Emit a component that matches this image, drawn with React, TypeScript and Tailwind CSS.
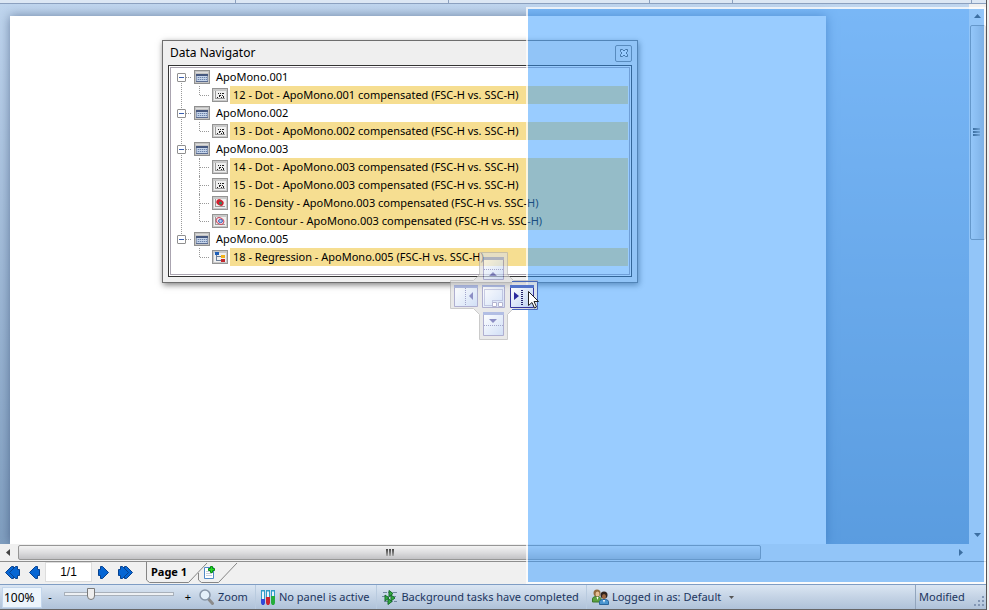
import React from 'react';

type PlotKind = 'dot' | 'density' | 'contour' | 'regression';

interface PlotItem {
  kind: PlotKind;
  label: string;
}

interface DataSet {
  name: string;
  plots: PlotItem[];
}

const dataSets: DataSet[] = [
  { name: 'ApoMono.001', plots: [{ kind: 'dot', label: '12 - Dot - ApoMono.001 compensated (FSC-H vs. SSC-H)' }] },
  { name: 'ApoMono.002', plots: [{ kind: 'dot', label: '13 - Dot - ApoMono.002 compensated (FSC-H vs. SSC-H)' }] },
  {
    name: 'ApoMono.003',
    plots: [
      { kind: 'dot', label: '14 - Dot - ApoMono.003 compensated (FSC-H vs. SSC-H)' },
      { kind: 'dot', label: '15 - Dot - ApoMono.003 compensated (FSC-H vs. SSC-H)' },
      { kind: 'density', label: '16 - Density - ApoMono.003 compensated (FSC-H vs. SSC-H)' },
      { kind: 'contour', label: '17 - Contour - ApoMono.003 compensated (FSC-H vs. SSC-H)' },
    ],
  },
  { name: 'ApoMono.005', plots: [{ kind: 'regression', label: '18 - Regression - ApoMono.005 (FSC-H vs. SSC-H)' }] },
];

const TableIcon = () => (
  <svg width="16" height="14" viewBox="0 0 16 14" shapeRendering="crispEdges" aria-hidden="true">
    <rect width="16" height="14" fill="#8f8f8f" />
    <rect x="1" y="1" width="14" height="12" fill="#c4c4c4" />
    <rect x="2" y="2" width="12" height="1" fill="#dedede" />
    <rect x="2" y="4" width="12" height="8" fill="#8a9ab8" />
    <rect x="2" y="4" width="12" height="2" fill="#46587f" />
    <rect x="3" y="6" width="10" height="5" fill="#c6d5ea" />
    <path d="M3 7h10v1H3zM3 9h10v1H3z" fill="#a9bcd8" />
    <path d="M4 7h1v1H4zM6 7h1v1H6zM8 7h1v1H8zM10 7h1v1h-1zM12 7h1v1h-1zM4 9h1v1H4zM6 9h1v1H6zM8 9h1v1H8zM10 9h1v1h-1zM12 9h1v1h-1z" fill="#6b82a9" />
    <rect x="2" y="11" width="12" height="1" fill="#5b6d92" />
  </svg>
);

const PlotIcon = ({ kind }: { kind: PlotKind }) => (
  <svg width="16" height="14" viewBox="0 0 16 14" shapeRendering="crispEdges" aria-hidden="true">
    <rect width="16" height="14" fill="#949494" />
    <rect x="1" y="1" width="14" height="12" fill="#c9c9c9" />
    <rect x="2" y="3" width="12" height="9" fill="#f0f0f0" />
    {kind !== 'regression' && <path d="M3 3h1v7h9v1H3z" fill="#9a9a9a" />}
    {kind === 'dot' && (
      <path
        fill="#222"
        d="M5 9h1v1H5zM6 5h1v1H6zM7 7h2v1H7zM8 5h1v1H8zM10 5h2v1h-2zM9 9h1v1H9zM11 8h1v2h-1zM7 8h1v1H7zM10 7h1v1h-1z"
      />
    )}
    {kind === 'density' && (
      <g shapeRendering="auto">
        <ellipse cx="8" cy="6.500" rx="3.800" ry="3" transform="rotate(30 8 6.500)" fill="#d1202f" />
        <circle cx="8.500" cy="7" r="1.500" fill="#2b8a65" />
      </g>
    )}
    {kind === 'contour' && (
      <g shapeRendering="auto" fill="none">
        <ellipse cx="8" cy="7" rx="4" ry="3" transform="rotate(30 8 7)" fill="#f3dfe4" stroke="#c9485f" />
        <ellipse cx="8.500" cy="7" rx="2" ry="1.600" fill="#aacdf2" stroke="#3563bd" />
      </g>
    )}
    {kind === 'regression' && (
      <>
        <path d="M4 5h1v6H4zM4 6h6v1H4zM4 10h6v1H4z" fill="#6d7f99" />
        <rect x="3" y="2" width="4" height="3" fill="#1f5fb8" />
        <rect x="9" y="5" width="4" height="3" fill="#f0b21d" />
        <rect x="9" y="9" width="4" height="3" fill="#c3272d" />
      </>
    )}
  </svg>
);

const TreeGroup = ({ data, last }: { data: DataSet; last: boolean }) => (
  <li className="relative">
    {!last && <span className="absolute top-3 -bottom-2 left-[10px] border-l border-dotted border-[#999]" />}
    <div className="relative flex h-[18px] items-center">
      <button
        aria-label={`Collapse ${data.name}`}
        className="ml-[6px] flex size-[9px] items-center justify-center rounded-[1px] border border-[#8f8f8f] bg-white"
      >
        <span className="h-px w-[5px] bg-[#3a5fae]" />
      </button>
      <span className="mr-[3px] w-[5px] border-t border-dotted border-[#999]" />
      <TableIcon />
      <span className="ml-[6px]">{data.name}</span>
    </div>
    <ul>
      {data.plots.map((plot, i) => (
        <li key={plot.label} className="relative flex h-[18px] items-center pl-[41px]">
          <span
            className={`absolute left-[28px] border-l border-dotted border-[#999] ${
              i === data.plots.length - 1 ? 'top-0 h-[9px]' : 'inset-y-0'
            }`}
          />
          <span className="absolute top-[9px] left-[29px] w-[9px] border-t border-dotted border-[#999]" />
          <PlotIcon kind={plot.kind} />
          <span className="ml-[2px] flex h-full flex-1 items-center bg-[#f6de91] pl-[3px]">{plot.label}</span>
        </li>
      ))}
    </ul>
  </li>
);

const DataNavigator = () => (
  <section
    aria-label="Data Navigator"
    className="absolute top-[36px] left-[162px] flex h-[243px] w-[476px] flex-col border border-[#6e6e6e] bg-[#efefef] p-[5px] pt-0 shadow-[1px_2px_6px_rgba(0,0,0,0.5)]"
  >
    <header className="flex h-[24px] items-center justify-between pl-[2px] text-[12px]">
      <h1>Data Navigator</h1>
      <button
        aria-label="Close"
        className="flex size-[17px] items-center justify-center rounded-[2px] border border-[#7c7c7c]"
      >
        <svg width="8" height="8" viewBox="0 0 8 8" fill="#fff" stroke="#555" aria-hidden="true">
          <path d="M.5.5h2L4 2 5.500.5h2v2L6 4l1.500 1.500v2h-2L4 6 2.500 7.500h-2v-2L2 4 .5 2.500z" />
        </svg>
      </button>
    </header>
    <div className="flex-1 border border-[#333] bg-white p-px">
      <ul className="h-full border border-[#aaa4b0] pr-px text-[11px] leading-[18px] whitespace-nowrap">
        {dataSets.map((data, i) => (
          <TreeGroup key={data.name} data={data} last={i === dataSets.length - 1} />
        ))}
      </ul>
    </div>
  </section>
);

const DockGuide = () => (
  <svg
    className="absolute top-[252px] left-[450px]"
    width="90"
    height="90"
    viewBox="0 0 90 90"
    role="img"
    aria-label="Dock position"
  >
    <defs>
      <linearGradient id="pane" x1="0" y1="0" x2="1" y2="1">
        <stop offset="0" stopColor="#fff" />
        <stop offset="1" stopColor="#b9cff2" />
      </linearGradient>
    </defs>
    <g opacity=".65">
      <path d="M29.500.5h28v22l6 6h24v28h-24l-6 6v25h-28v-25l-6-6h-23v-28h23l6-6z" fill="#dedede" stroke="#b0b0b0" />
      <g fill="url(#pane)" stroke="#8585b8">
        <path d="M33.500 5.500h20v22h-20z" />
        <path d="M4.500 33.500h23v21h-23z" />
        <path d="M32.500 33.500h22v22h-22z" />
        <path d="M33.500 60.500h20v23h-20z" />
      </g>
      <path d="M33 5h21v3H33zM4 33h24v3H4zM32 33h23v2H32zM33 60h21v3H33z" fill="#8a9cd6" />
      <path d="M34 17.500h20M34 73.500h20M15.500 36v18" stroke="#7277b0" strokeDasharray="1 1" />
      <path d="M34.500 37.500h18v11h-10v5h-8z" fill="none" stroke="#6c70b0" strokeDasharray="1 1" />
      <path d="M42.500 50.500h4v4h-4zM48.500 50.500h4v4h-4z" fill="#fff" stroke="#8d8db8" />
      <path d="M39 24l4-4 4 4zM39 67h8l-4 4zM23 40v8l-4-4z" fill="#4f52a5" />
    </g>
    <path d="M62 29.500h25.500v28H62" fill="#f2f2f2" fillOpacity=".45" stroke="#4668bb" />
    <path d="M60.500 33.500h23v22h-23z" fill="url(#pane)" stroke="#35359c" />
    <path d="M60 33h24v3H60z" fill="#5273ca" />
    <path d="M71 38h2v1h-2zM71 40h2v1h-2zM71 42h2v1h-2zM71 44h2v1h-2zM71 46h2v1h-2zM71 48h2v1h-2zM71 50h2v1h-2zM71 52h2v1h-2z" fill="#22226b" />
    <path d="M64 40v8l5-4z" fill="#29299e" />
  </svg>
);

const PageArrow = ({ double, back }: { double?: boolean; back?: boolean }) => (
  <svg
    width={double ? 15 : 11}
    height="13"
    viewBox={double ? '0 0 15 13' : '0 0 11 13'}
    fill="#0666d4"
    stroke="#07418e"
    className={back ? 'rotate-180' : ''}
    aria-hidden="true"
  >
    {double && <path d="M6.500.5h2l6 6-6 6h-2V9.500h-2v-6h2z" />}
    <path d="M.5 3.500h2v-3h2l6 6-6 6h-2v-3h-2z" />
  </svg>
);

const Pager = () => (
  <nav aria-label="Pages" className="flex h-[23px] shrink-0 items-center border-t border-[#8e8e8e] bg-[#f0f0f0]">
    <div className="flex items-center pb-[2px]">
      <button aria-label="First page" className="ml-[5px]">
        <PageArrow double back />
      </button>
      <button aria-label="Previous page" className="ml-[9px]">
        <PageArrow back />
      </button>
      <input
        aria-label="Page number"
        defaultValue="1/1"
        className="mx-[5px] h-[20px] w-[47px] border border-[#ddd] bg-white text-center font-['Liberation_Sans',sans-serif] text-[12px] outline-none"
      />
      <button aria-label="Next page" className="ml-px">
        <PageArrow />
      </button>
      <button aria-label="Last page" className="ml-[9px]">
        <PageArrow double />
      </button>
    </div>
    <div className="relative ml-[13px] flex h-full w-[94px] items-center pb-[2px]">
      <svg className="absolute inset-0" width="94" height="22" viewBox="0 0 94 22" fill="none" stroke="#858585" aria-hidden="true">
        <path d="M.5 0v18l3 2.500h39L61 1M52.500 11v7l3 2.500h17L91 1" />
      </svg>
      <button className="relative pl-[5px] text-[11px] font-bold">Page 1</button>
      <button aria-label="Add page" className="relative ml-[16px]">
        <svg width="14" height="15" viewBox="0 0 14 15" aria-hidden="true">
          <path d="M1.500 2.500h9v11h-9z" fill="#fff" stroke="#4e88c7" />
          <path d="M3 6.500h4M3 8.500h6M3 10.500h6" stroke="#c5cedb" />
          <path d="M5.500 3.500h2v-2h2v2h2v2h-2v2h-2v-2h-2z" fill="#26dc25" stroke="#078a12" />
        </svg>
      </button>
    </div>
  </nav>
);

const MagnifierIcon = () => (
  <svg width="16" height="16" viewBox="0 0 16 16" aria-hidden="true">
    <path d="M9.500 10l4 4.500" stroke="#8b8b8b" strokeWidth="3" strokeLinecap="round" />
    <circle cx="6" cy="6" r="5" fill="#e4f0fa" stroke="#8796a8" strokeWidth="1.500" />
  </svg>
);

const TubesIcon = () => (
  <svg width="15" height="15" viewBox="0 0 15 15" aria-hidden="true">
    <path d="M.5 1v11.500l1 1.500h1l1-1.500V1z" fill="#e8f5fc" stroke="#2f9cc8" />
    <path d="M5.500 1v11.500l1 1.500h1l1-1.500V1z" fill="#e8f5fc" stroke="#2f9cc8" />
    <path d="M10.500 1v11.500l1 1.500h1l1-1.500V1z" fill="#e8f5fc" stroke="#2f9cc8" />
    <path d="M0 9h4v4l-1 2H1l-1-2z" fill="#3047d8" />
    <path d="M5 7h4v6l-1 2H6l-1-2z" fill="#cc2532" />
    <path d="M10 6h4v7l-1 2h-2l-1-2z" fill="#25ad3b" />
    <path d="M0 0h4v1H0zM5 0h4v1H5zM10 0h4v1h-4z" fill="#2f9cc8" />
  </svg>
);

const TasksIcon = () => (
  <svg width="16" height="15" viewBox="0 0 16 15" aria-hidden="true">
    <path d="M1 2.500h14M0 6.500h14M2 11.500h13" stroke="#7187a0" strokeDasharray="4 1" />
    <path d="M7 .5l4 3-4 3zM3 5l4 3-4 3zM9 5l4 3-4 3zM6 8.500l4 3-4 3z" fill="#32ae3c" stroke="#146c2b" />
  </svg>
);

const UsersIcon = () => (
  <svg width="17" height="16" viewBox="0 0 17 16" aria-hidden="true">
    <path d="M.5 13V9.500Q1 7.500 4 7.500h3l2 2V13z" fill="#5da340" stroke="#3b772b" />
    <path d="M4.500 8l1 3 1-3z" fill="#fff" />
    <circle cx="5" cy="4" r="3.500" fill="#936b3e" />
    <ellipse cx="5.500" cy="5" rx="2" ry="2.500" fill="#e7be94" />
    <path d="M7.500 15.500v-3q.5-2 3-2h3q2.500 0 3 2v3z" fill="#4a95d0" stroke="#28649c" />
    <path d="M11 11l1 3 1-3z" fill="#fff" />
    <circle cx="12" cy="6" r="3.500" fill="#30241d" />
    <ellipse cx="12" cy="7.500" rx="2" ry="2.500" fill="#9c6843" />
  </svg>
);

const StatusBar = () => (
  <footer className="flex h-[26px] shrink-0 items-center border-t border-[#7f9dc4] border-b border-b-[#666] bg-gradient-to-b from-[#dbe6f3] via-[#c4d3e5] to-[#afc2d9] text-[11px] whitespace-nowrap text-[#1c355e]">
    <input
      aria-label="Zoom level"
      defaultValue="100%"
      className="ml-[2px] h-[21px] w-[40px] border border-[#c3d6ec] bg-[#edf5fc] px-px text-[12px] text-black outline-none"
    />
    <button aria-label="Zoom out" className="ml-[5px] w-[6px] text-black">-</button>
    <input
      type="range"
      aria-label="Zoom"
      min={0}
      max={100}
      defaultValue={22}
      className="-mt-[6px] ml-[11px] h-[14px] w-[110px] appearance-none bg-transparent [&::-webkit-slider-runnable-track]:h-[4px] [&::-webkit-slider-runnable-track]:border [&::-webkit-slider-runnable-track]:border-[#a8b0ba] [&::-webkit-slider-runnable-track]:bg-[#edf0f3] [&::-webkit-slider-thumb]:-mt-[5px] [&::-webkit-slider-thumb]:h-[12px] [&::-webkit-slider-thumb]:w-[8px] [&::-webkit-slider-thumb]:appearance-none [&::-webkit-slider-thumb]:rounded-b-[4px] [&::-webkit-slider-thumb]:border [&::-webkit-slider-thumb]:border-[#7a7a7a] [&::-webkit-slider-thumb]:bg-[#eee]"
    />
    <button aria-label="Zoom in" className="ml-[10px] w-[8px] text-black">+</button>
    <button className="ml-[7px] flex items-center gap-[3px]">
      <MagnifierIcon />
      Zoom
    </button>
    <span className="ml-[7px] flex h-full items-center gap-[3px] border-l border-[#b9cbdf] pl-[5px]">
      <TubesIcon />
      No panel is active
    </span>
    <span className="ml-[7px] flex h-full items-center gap-[3px] border-l border-[#b9cbdf] pl-[5px]">
      <TasksIcon />
      Background tasks have completed
    </span>
    <button className="ml-[7px] flex h-full items-center gap-[3px] border-l border-[#b9cbdf] pl-[5px]">
      <UsersIcon />
      Logged in as: Default
      <svg className="ml-[5px]" width="5" height="3" viewBox="0 0 5 3" fill="#555" aria-hidden="true">
        <path d="M0 0h5L2.500 3z" />
      </svg>
    </button>
    <span className="ml-auto flex h-full w-[71px] items-center justify-between border-l border-[#92a5bd] pr-px pl-[3px]">
      Modified
      <svg className="mt-[8px]" width="11" height="11" viewBox="0 0 11 11" fill="#8296b4" aria-hidden="true">
        <path d="M8 0h2v2H8zM4 4h2v2H4zM8 4h2v2H8zM0 8h2v2H0zM4 8h2v2H4zM8 8h2v2H8z" />
      </svg>
    </span>
  </footer>
);

const HorizontalScrollbar = () => (
  <div className="flex h-[17px] shrink-0 items-center bg-[#f0f0f0] pr-[20px]">
    <button aria-label="Scroll left" className="flex w-[18px] justify-center pr-[2px]">
      <svg width="4" height="7" viewBox="0 0 4 7" fill="#444" aria-hidden="true">
        <path d="M4 0v7L0 3.500z" />
      </svg>
    </button>
    <div className="flex h-full flex-1 items-center">
      <div className="flex h-[15px] w-[79%] items-center justify-center gap-px rounded-[2px] border border-[#969696] bg-gradient-to-b from-[#f3f3f3] via-[#dddddf] to-[#c2c2c5]">
        <span className="h-[7px] w-[2px] bg-gradient-to-b from-[#444] to-[#aaa]" />
        <span className="h-[7px] w-[2px] bg-gradient-to-b from-[#444] to-[#aaa]" />
        <span className="h-[7px] w-[2px] bg-gradient-to-b from-[#444] to-[#aaa]" />
      </div>
    </div>
    <button aria-label="Scroll right" className="mr-[3px]">
      <svg width="4" height="7" viewBox="0 0 4 7" fill="#444" aria-hidden="true">
        <path d="M0 0v7l4-3.500z" />
      </svg>
    </button>
  </div>
);

const VerticalScrollbar = () => (
  <div className="flex w-[17px] shrink-0 flex-col bg-[#f0f0f0] pt-[3px]">
    <button aria-label="Scroll up" className="flex h-[18px] items-center justify-center">
      <svg width="7" height="4" viewBox="0 0 7 4" fill="#444" aria-hidden="true">
        <path d="M0 4h7L3.500 0z" />
      </svg>
    </button>
    <div className="flex-1">
      <div className="ml-px flex h-3/7 flex-col items-center justify-center gap-px rounded-[2px] border border-[#969696] bg-gradient-to-r from-[#f3f3f3] via-[#dddddf] to-[#c2c2c5] pr-[3px]">
        <span className="h-[2px] w-[7px] bg-gradient-to-r from-[#444] to-[#aaa]" />
        <span className="h-[2px] w-[7px] bg-gradient-to-r from-[#444] to-[#aaa]" />
        <span className="h-[2px] w-[7px] bg-gradient-to-r from-[#444] to-[#aaa]" />
      </div>
    </div>
    <button aria-label="Scroll down" className="flex h-[18px] items-center justify-center">
      <svg width="7" height="4" viewBox="0 0 7 4" fill="#444" aria-hidden="true">
        <path d="M0 0h7L3.500 4z" />
      </svg>
    </button>
  </div>
);

const App: React.FC = () => (
  <div className="flex h-screen overflow-hidden bg-[#f1f1f1] pr-[2px] font-['Noto_Sans',sans-serif] text-black">
    <div className="relative flex min-w-0 flex-1 flex-col border-r border-[#555]">
      {/* bottom edge of the ribbon with its group dividers */}
      <div className="flex h-[4px] shrink-0 border-b border-[#8ba0bf] bg-[#dce7f4]">
        <span className="w-[236px] border-r border-[#8ba0bf]" />
        <span className="w-[213px] border-r border-[#8ba0bf]" />
        <span className="w-[201px] border-r border-[#8ba0bf]" />
        <span className="w-[83px] border-r border-[#8ba0bf]" />
        <span className="flex-1 border-r border-[#8ba0bf]" />
        <span className="w-[14px]" />
      </div>

      <main className="flex min-h-0 flex-1">
        <div className="relative flex min-w-0 flex-1 overflow-hidden bg-gradient-to-b from-[#bfd5ee] to-[#819fc0] pt-[12px] pr-[143px] pl-[10px]">
          <div className="flex-1 bg-white shadow-[0_0_10px_rgba(30,50,90,0.5)]" />
          <DataNavigator />
        </div>
        <VerticalScrollbar />
      </main>
      <HorizontalScrollbar />
      <Pager />
      <StatusBar />

      {/* preview of the docked area */}
      <div className="pointer-events-none absolute top-[7px] right-0 bottom-[26px] left-[526px] border-2 border-white/70 bg-[#3399ff]/50 bg-clip-padding" />
      <DockGuide />
      <svg className="absolute top-[290px] left-[527px]" width="13" height="19" viewBox="0 0 13 19" aria-hidden="true">
        <path d="M1.500 1.500v14l3.500-3 2.500 5.500 2-1-2.500-5.500h4.500z" fill="#fff" stroke="#222" />
      </svg>
    </div>
  </div>
);

export default App;
